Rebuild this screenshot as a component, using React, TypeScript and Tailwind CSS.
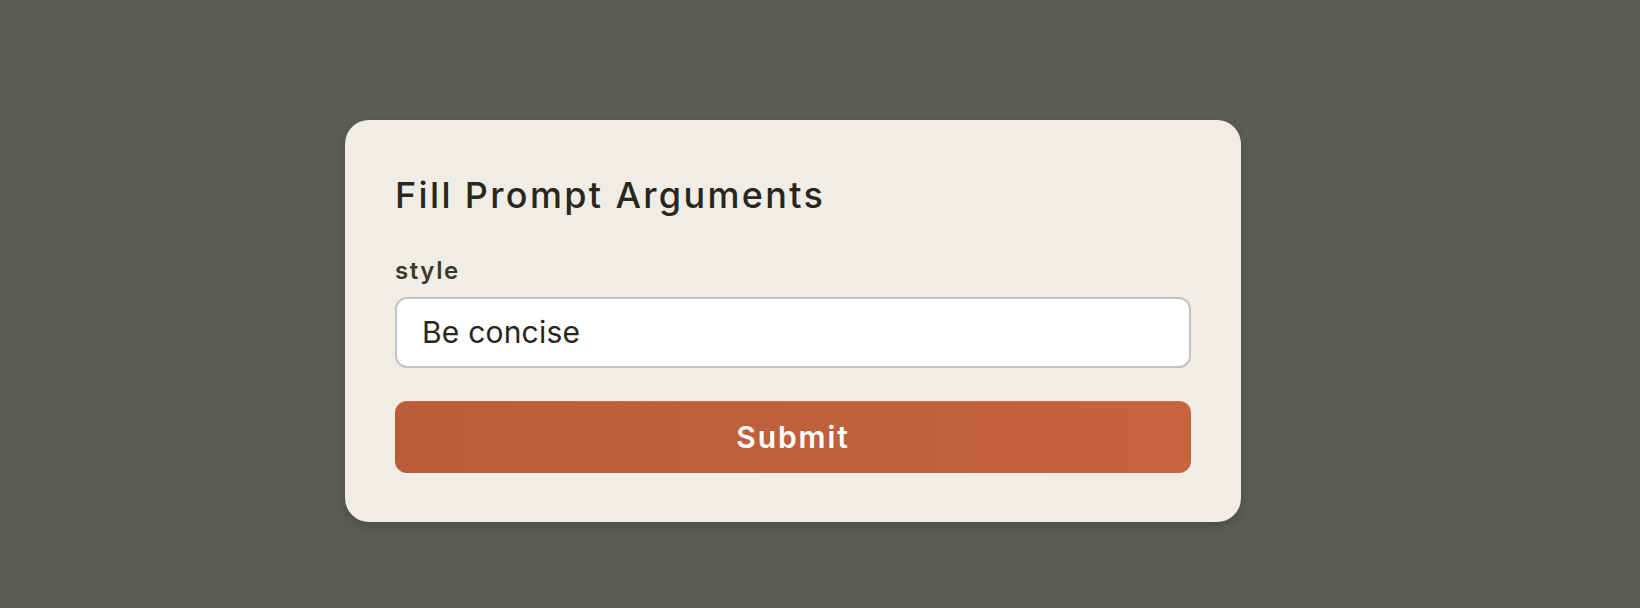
import React from "react";

export default function App() {
  return (
    <div
      className="w-full h-[608px] overflow-hidden bg-[#5c5c57] pt-[120px] pl-[345px]"
      style={{ fontFamily: "Inter, 'Noto Sans', sans-serif" }}
    >
      <div className="w-[896px] rounded-[24px] bg-[#f0ede6] px-[50px] pt-[55px] pb-[49px] shadow-[0_4px_10px_rgba(0,0,0,0.18)]">
        <h2 className="text-[36px] leading-[40px] font-medium text-[#29261b] tracking-[2.35px]">
          Fill Prompt Arguments
        </h2>
        <div className="mt-[40px]">
          <label className="block text-[24px] leading-[32px] font-semibold text-[#3d3929] tracking-[1.6px]">
            style
          </label>
          <div className="mt-[10px] h-[71px] rounded-[12px] border-2 border-[#c5c3bd] bg-white flex items-center pl-[25px]">
            <span className="text-[30px] text-[#29261b] tracking-[0.2px]">Be concise</span>
          </div>
        </div>
        <button className="mt-[33px] w-full h-[72px] rounded-[12px] bg-linear-to-r from-[#bb5b38] to-[#c5643f] text-white text-[30px] font-semibold tracking-[1.9px] shadow-[inset_0_1px_0_rgba(220,120,70,0.6)]">
          Submit
        </button>
      </div>
    </div>
  );
}
